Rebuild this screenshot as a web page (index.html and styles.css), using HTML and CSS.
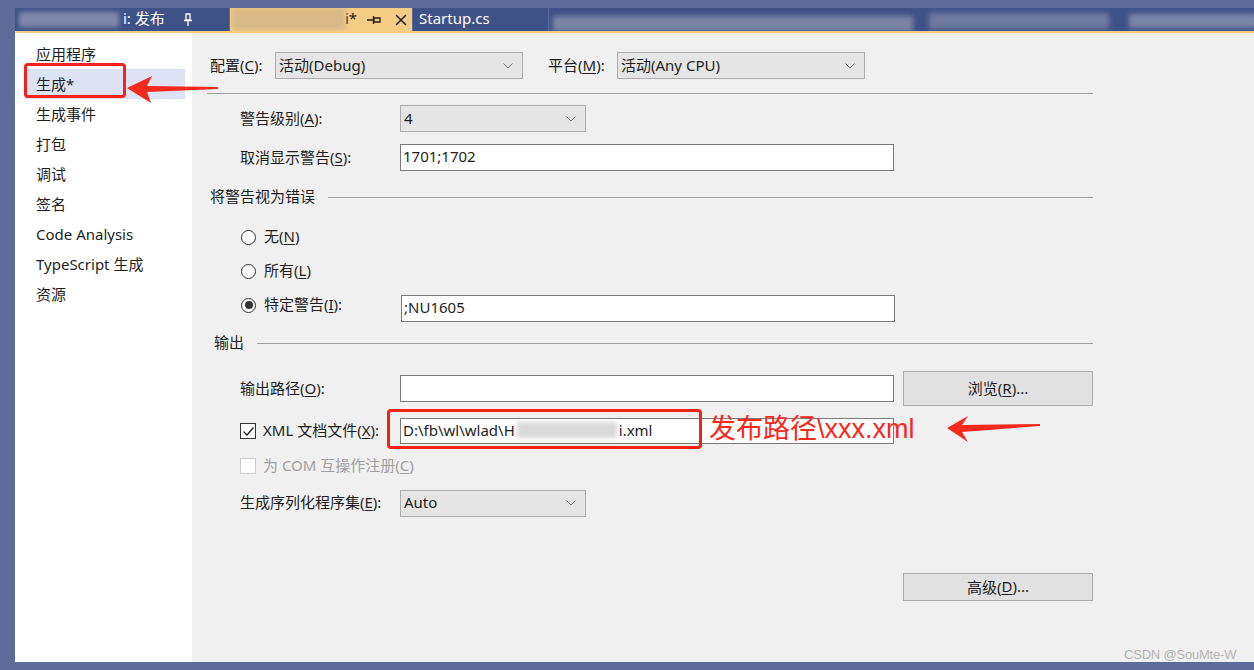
FILE: index.html
```html
<!DOCTYPE html>
<html lang="zh-CN">
<head>
<meta charset="utf-8">
<title>生成</title>
<link rel="stylesheet" href="styles.css">
</head>
<body>
<div class="frame">
  <div class="tabs">
    <div class="tab tab-first">
      <span class="blur blur-tab1"></span>
      <span class="tab-text">i: 发布</span>
      <svg class="pin-v" width="10" height="13" viewBox="0 0 10 13"><path d="M3 1h4v6H3z M1 7.5h8 M5 8v5" fill="none" stroke="#fff" stroke-width="1.3"/></svg>
    </div>
    <div class="tab tab-active">
      <span class="blur blur-tab2"></span>
      <span class="tab-text dark">i*</span>
      <svg class="pin-h" width="15" height="10" viewBox="0 0 15 10"><path d="M0 5h6 M6.5 1v8 M7 3h6v4H7z" fill="none" stroke="#1e1e1e" stroke-width="1.3"/></svg>
      <svg class="close" width="12" height="12" viewBox="0 0 12 12"><path d="M1 1l10 10M11 1L1 11" stroke="#1e1e1e" stroke-width="1.5"/></svg>
    </div>
    <div class="tab tab-third">
      <span class="tab-text">Startup.cs</span>
    </div>
    <div class="tab tab-rest">
      <span class="blur blur-r1"></span>
      <span class="blur blur-r2"></span>
      <span class="blur blur-r3"></span>
    </div>
  </div>
  <div class="tabline"></div>
  <div class="main">
    <nav class="nav">
      <div class="nav-item">应用程序</div>
      <div class="nav-item selected">生成*</div>
      <div class="nav-item">生成事件</div>
      <div class="nav-item">打包</div>
      <div class="nav-item">调试</div>
      <div class="nav-item">签名</div>
      <div class="nav-item">Code Analysis</div>
      <div class="nav-item">TypeScript 生成</div>
      <div class="nav-item">资源</div>
    </nav>
    <section class="pane">
      <div class="row row-top">
        <span class="lbl lbl-config">配置(<u>C</u>):</span>
        <div class="combo combo-wide"><span>活动(Debug)</span><svg class="chev" width="10" height="6" viewBox="0 0 10 6"><path d="M0.5 0.5L5 5l4.5-4.5" fill="none" stroke="#707070" stroke-width="1"/></svg></div>
        <span class="lbl lbl-platform">平台(<u>M</u>):</span>
        <div class="combo combo-wide"><span>活动(Any CPU)</span><svg class="chev" width="10" height="6" viewBox="0 0 10 6"><path d="M0.5 0.5L5 5l4.5-4.5" fill="none" stroke="#707070" stroke-width="1"/></svg></div>
      </div>
      <div class="sep"></div>

      <div class="row row-field row-warn">
        <span class="lbl lbl-col">警告级别(<u>A</u>):</span>
        <div class="combo combo-small"><span>4</span><svg class="chev" width="10" height="6" viewBox="0 0 10 6"><path d="M0.5 0.5L5 5l4.5-4.5" fill="none" stroke="#707070" stroke-width="1"/></svg></div>
      </div>
      <div class="row row-field row-suppress">
        <span class="lbl lbl-col">取消显示警告(<u>S</u>):</span>
        <div class="textbox">1701;1702</div>
      </div>

      <div class="group-head head-errors">
        <span class="lbl">将警告视为错误</span><span class="head-line"></span>
      </div>
      <div class="row row-radio first-radio">
        <span class="radio"></span><span class="lbl">无(<u>N</u>)</span>
      </div>
      <div class="row row-radio">
        <span class="radio"></span><span class="lbl">所有(<u>L</u>)</span>
      </div>
      <div class="row row-radio row-specific">
        <span class="radio checked"></span><span class="lbl lbl-radio">特定警告(<u>I</u>):</span>
        <div class="textbox textbox-low">;NU1605</div>
      </div>

      <div class="group-head head-output">
        <span class="lbl">输出</span><span class="head-line"></span>
      </div>
      <div class="row row-field row-outpath">
        <span class="lbl lbl-col">输出路径(<u>O</u>):</span>
        <div class="textbox"></div>
        <div class="button btn-browse">浏览(<u>R</u>)...</div>
      </div>
      <div class="row row-field row-xml">
        <span class="check checked"><svg width="13" height="11" viewBox="0 0 13 11"><path d="M1.5 5.5l3.5 3.5 6.5-7.5" fill="none" stroke="#1e1e1e" stroke-width="1.3"/></svg></span>
        <span class="lbl lbl-xml">XML 文档文件(<u>X</u>):</span>
        <div class="textbox">D:\fb\wl\wlad\H<span class="blur blur-path"></span>i.xml</div>
      </div>
      <div class="row row-com">
        <span class="check disabled"></span>
        <span class="lbl lbl-disabled">为 COM 互操作注册(<u>C</u>)</span>
      </div>
      <div class="row row-field row-serial">
        <span class="lbl lbl-col">生成序列化程序集(<u>E</u>):</span>
        <div class="combo combo-small"><span>Auto</span><svg class="chev" width="10" height="6" viewBox="0 0 10 6"><path d="M0.5 0.5L5 5l4.5-4.5" fill="none" stroke="#707070" stroke-width="1"/></svg></div>
      </div>
      <div class="row row-advanced">
        <div class="button btn-adv">高级(<u>D</u>)...</div>
      </div>
    </section>
  </div>
</div>

<div class="mark mark-nav"></div>
<svg class="arrow arrow-nav" width="100" height="30" viewBox="0 0 100 30"><path d="M1 12 L26 0 L21 10 L92 11 L92 13 L21 16 L25 27 Z" fill="#f52a1d"/></svg>
<div class="mark mark-xml"></div>
<div class="note">发布路径\xxx.xml</div>
<svg class="arrow arrow-xml" width="96" height="30" viewBox="0 0 96 30"><path d="M0 13 L21 1 L15 10 L93 9 L93 11 L15 17 L21 27 Z" fill="#f52a1d"/></svg>
<div class="watermark">CSDN @SouMte-W</div>
</body>
</html>
```

FILE: styles.css
```css
html, body {
  margin: 0;
  padding: 0;
}
body {
  width: 1254px;
  height: 670px;
  overflow: hidden;
  position: relative;
  background: #5d6b99;
  font-family: "Noto Sans", "Noto Sans CJK SC", sans-serif;
  font-size: 15px;
  color: #1e1e1e;
}
u {
  text-decoration-thickness: 1px;
  text-underline-offset: 2px;
}

.frame {
  margin-left: 15px;
  height: 662px;
  display: flex;
  flex-direction: column;
}

/* tabs */
.tabs {
  margin-top: 8px;
  height: 23px;
  display: flex;
}
.tab {
  position: relative;
  display: flex;
  align-items: center;
  background: #3f5288;
  color: #fff;
  overflow: hidden;
}
.tab-first { width: 214px; }
.tab-active { width: 182px; margin-left: 1px; background: #f5cc84; }
.tab-third { width: 135px; margin-left: 1px; }
.tab-rest { flex: 1; margin-left: 1px; }
.tab-text { line-height: 23px; white-space: nowrap; margin-bottom: 2px; }
.tab-text.dark { color: #1e1e1e; }
.tab-first .tab-text { margin-left: 108px; }
.tab-first .pin-v { margin-left: 18px; }
.tab-active .tab-text { margin-left: 115px; }
.tab-active .pin-h { margin-left: 10px; }
.tab-active .close { margin-left: 13px; }
.tab-third .tab-text { margin-left: 6px; }

.blur {
  position: absolute;
  filter: blur(2.5px);
}
.blur-tab1 { left: 4px; top: 4px; width: 100px; height: 15px; background: #8089ab; }
.blur-tab2 { left: 2px; top: 0px; width: 113px; height: 22px; background: #d8b987; }
.blur-r1 { left: 4px; top: 8px; width: 360px; height: 15px; background: #7b85a5; }
.blur-r2 { left: 380px; top: 5px; width: 180px; height: 16px; background: #6f7aa0; }
.blur-r3 { left: 580px; top: 6px; width: 130px; height: 14px; background: #7a84a6; }

.tabline {
  height: 2px;
  background: #f5cc84;
}

/* main */
.main {
  flex: 1;
  display: flex;
}
.nav {
  width: 177px;
  background: #fff;
  padding-top: 6px;
}
.nav-item {
  height: 30px;
  line-height: 30px;
  margin-left: 9px;
  width: 161px;
  padding-left: 12px;
  box-sizing: border-box;
  white-space: nowrap;
}
.nav-item.selected { background: #dde2f5; }

.pane {
  flex: 1;
  background: #f0f0f0;
  padding: 19px 0 0 18px;
}
.row {
  display: flex;
  align-items: center;
  white-space: nowrap;
}
.lbl { margin-bottom: 3px; }
.row-top { height: 27px; }
.lbl-config { width: 65px; }
.lbl-platform { width: 69px; margin-left: 25px; }

.combo {
  height: 27px;
  box-sizing: border-box;
  border: 1px solid #adadad;
  background: #e5e5e5;
  display: flex;
  align-items: center;
  justify-content: space-between;
  padding: 0 9px 2px 3px;
}
.combo .chev { margin-top: 2px; }
.combo-wide { width: 248px; }
.combo-small { width: 186px; }
.chev { flex: none; }

.textbox {
  width: 494px;
  height: 27px;
  box-sizing: border-box;
  border: 1px solid #7a7a7a;
  background: #fff;
  padding: 0 0 2px 2px;
  line-height: 25px;
  position: relative;
  display: flex;
  align-items: center;
}
.button {
  width: 190px;
  box-sizing: border-box;
  border: 1px solid #adadad;
  background: #e1e1e1;
  display: flex;
  align-items: center;
  justify-content: center;
  padding-bottom: 2px;
}

.sep {
  margin: 14px 0 0 -3px;
  width: 886px;
  height: 1px;
  background: #a0a0a0;
}

.row-field { margin-left: 30px; height: 27px; }
.lbl-col { width: 160px; }
.row-warn { margin-top: 11px; }
.row-suppress { margin-top: 12px; }

.group-head {
  display: flex;
  align-items: center;
  height: 20px;
  width: 883px;
}
.head-line {
  flex: 1;
  height: 1px;
  background: #a0a0a0;
  margin-left: 13px;
}
.head-errors { margin-top: 16px; }
.head-output { margin-top: 11px; margin-left: 4px; width: 879px; }

.row-radio { margin-left: 30px; height: 34px; }
.first-radio { margin-top: 13px; }
.radio {
  width: 15px;
  height: 15px;
  box-sizing: border-box;
  border: 1px solid #333;
  border-radius: 50%;
  background: #fff;
  margin: 0 8px 0 1px;
  display: flex;
  align-items: center;
  justify-content: center;
}
.radio.checked::after {
  content: "";
  width: 8px;
  height: 8px;
  border-radius: 50%;
  background: #333;
}
.lbl-radio { width: 137px; }
.textbox-low { align-self: flex-end; }

.row-outpath { margin-top: 18px; height: 35px; }
.btn-browse { height: 35px; margin-left: 9px; }

.row-xml { margin-top: 12px; height: 26px; }
.row-xml .textbox { height: 26px; }
.check {
  width: 16px;
  height: 16px;
  box-sizing: border-box;
  border: 1px solid #333;
  background: #fff;
  margin-right: 7px;
  display: flex;
  align-items: center;
  justify-content: center;
}
.check.disabled { border-color: #cccccc; }
.lbl-xml { width: 137px; }
.blur-path {
  position: static;
  display: inline-block;
  width: 100px;
  height: 16px;
  margin: 0 2px;
  background: #d9d9d9;
  filter: blur(2px);
}

.row-com { margin: 12px 0 0 30px; height: 20px; }
.lbl-disabled { color: #a0a0a0; }

.row-serial { margin-top: 14px; height: 26px; }

.row-advanced { margin-top: 57px; padding-left: 693px; }
.btn-adv { height: 28px; }

/* annotations */
.mark {
  position: absolute;
  box-sizing: border-box;
  border: 3px solid #f5221b;
  border-radius: 4px;
}
.mark-nav { left: 24px; top: 63px; width: 102px; height: 35px; }
.mark-xml { left: 387px; top: 409px; width: 315px; height: 40px; }
.arrow { position: absolute; }
.arrow-nav { left: 126px; top: 76px; }
.arrow-xml { left: 947px; top: 415px; }
.note {
  position: absolute;
  left: 709px;
  top: 411px;
  font-size: 27px;
  line-height: 36px;
  color: #f8281b;
  font-family: "Liberation Sans", "Noto Sans CJK SC", sans-serif;
  white-space: nowrap;
}
.watermark {
  position: absolute;
  left: 1124px;
  top: 647px;
  font-size: 13px;
  font-family: "Liberation Sans", sans-serif;
  color: #b4b4b4;
  letter-spacing: -0.2px;
}
```
